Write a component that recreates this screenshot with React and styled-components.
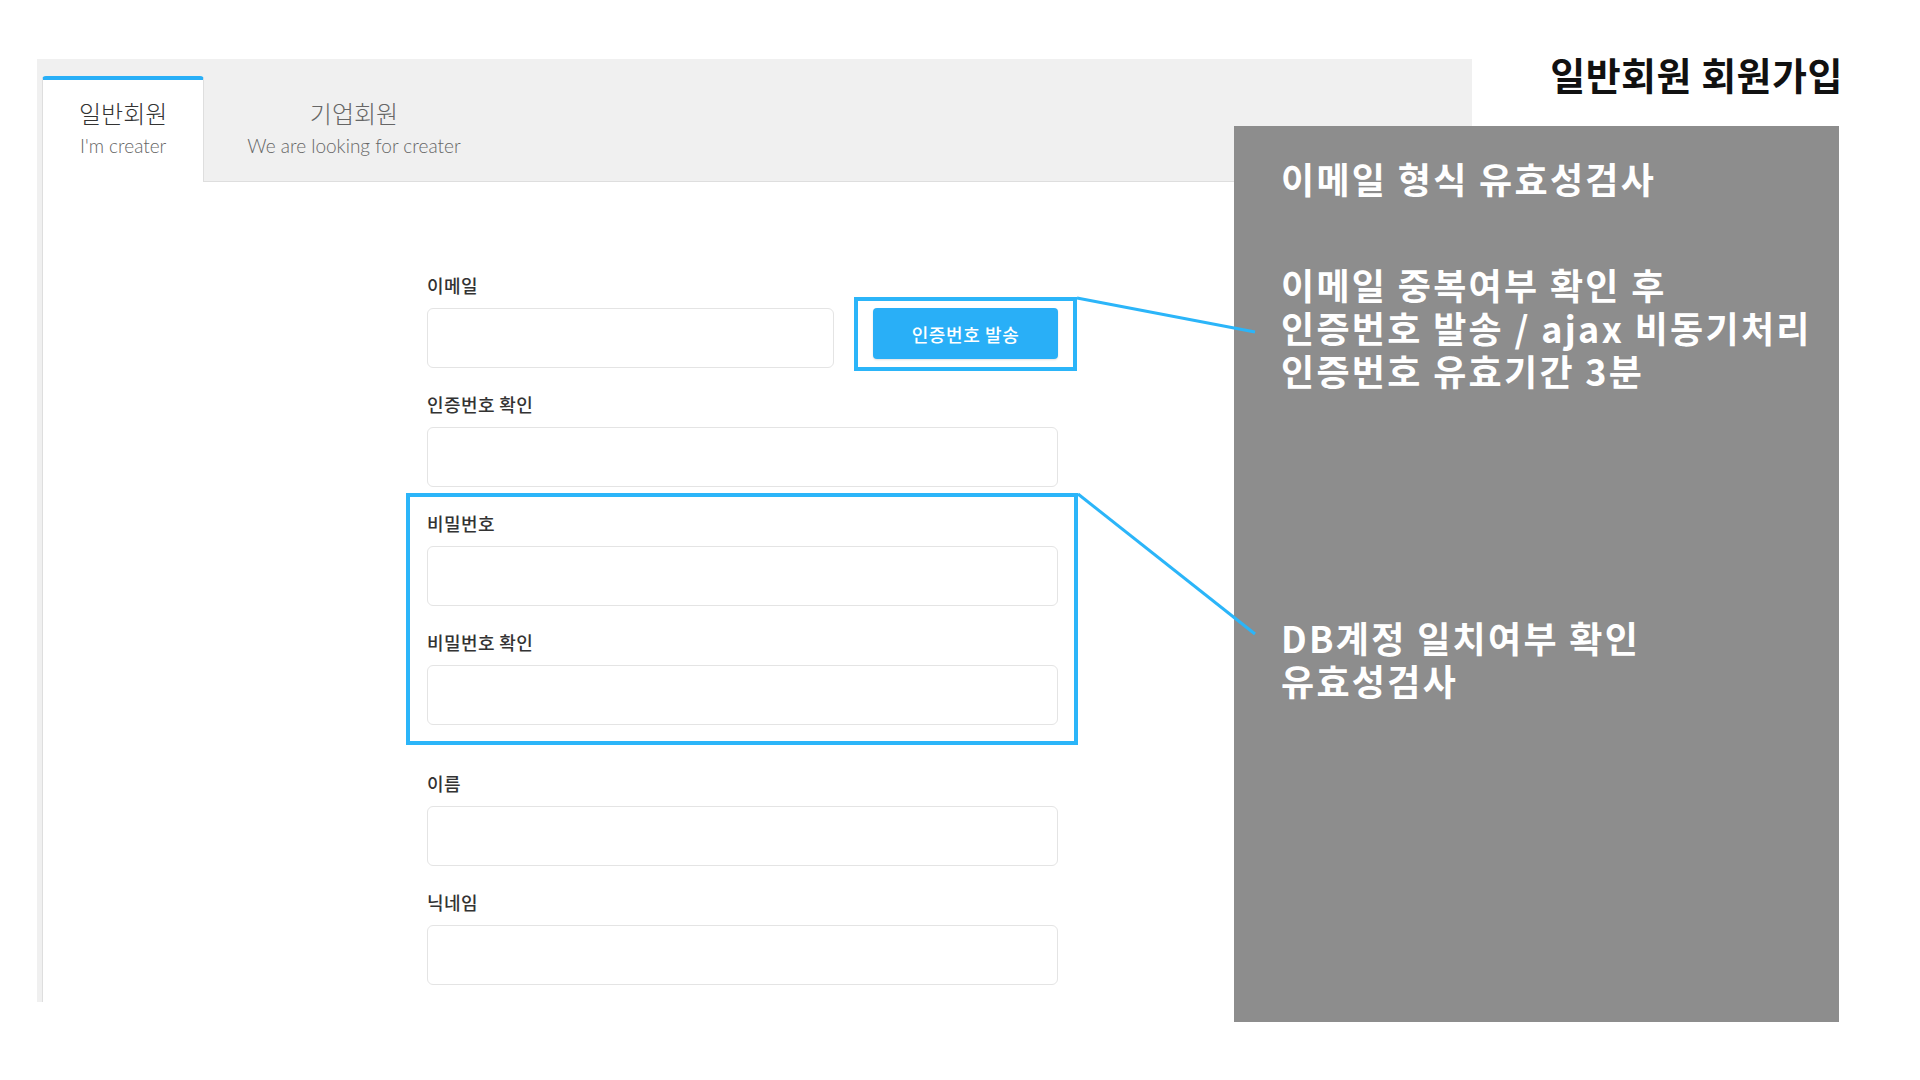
import React from 'react'
import styled, { createGlobalStyle } from 'styled-components'

const GlobalStyle = createGlobalStyle`
  body {
    margin: 0;
    background: #fff;
    font-family: "Noto Sans CJK KR", "Noto Sans", sans-serif;
  }
`

const fields = [
  { label: '인증번호 확인' },
]

export default function App() {
  return (
    <>
      <GlobalStyle />
      <Stage>
        <Shot>
          <TabBar>
            <Tab $active>
              <TabTitle>일반회원</TabTitle>
              <TabSub>I'm creater</TabSub>
            </Tab>
            <Tab>
              <TabTitle>기업회원</TabTitle>
              <TabSub>We are looking for creater</TabSub>
            </Tab>
          </TabBar>
          <Content>
            <Form>
              <Field>
                <Label>이메일</Label>
                <EmailRow>
                  <Input />
                  <Flagged>
                    <SendButton type="button">인증번호 발송</SendButton>
                  </Flagged>
                </EmailRow>
              </Field>
              {fields.map((f) => (
                <Field key={f.label}>
                  <Label>{f.label}</Label>
                  <Input />
                </Field>
              ))}
              <Group>
                <Field>
                  <Label>비밀번호</Label>
                  <Input type="password" />
                </Field>
                <Field>
                  <Label>비밀번호 확인</Label>
                  <Input type="password" />
                </Field>
              </Group>
              <Field>
                <Label>이름</Label>
                <Input />
              </Field>
              <Field>
                <Label>닉네임</Label>
                <Input />
              </Field>
            </Form>
          </Content>
        </Shot>

        <NoteColumn>
          <PageTitle>일반회원 회원가입</PageTitle>
          <NoteBox>
            <NoteBlock>이메일 형식 유효성검사</NoteBlock>
            <NoteBlock $gap={63}>
              이메일 중복여부 확인 후<br />
              인증번호 발송 / ajax 비동기처리<br />
              인증번호 유효기간 3분
            </NoteBlock>
            <NoteBlock $gap={224}>
              DB계정 일치여부 확인<br />
              유효성검사
            </NoteBlock>
          </NoteBox>
        </NoteColumn>

        <Connectors viewBox="0 0 1920 1080">
          <line x1="1077" y1="298" x2="1255" y2="332" />
          <line x1="1078" y1="494" x2="1255" y2="634" />
        </Connectors>
      </Stage>
    </>
  )
}

const Stage = styled.div`
  position: relative;
  width: 1920px;
  height: 1080px;
  box-sizing: border-box;
  padding-left: 37px;
  display: grid;
  grid-template-columns: 1197px 238px 367px;
  align-items: start;
  overflow: hidden;
`

const Shot = styled.div`
  grid-column: 1 / 3;
  grid-row: 1;
  margin-top: 59px;
  height: 943px;
  background: #f0f0f0;
  padding-left: 5px;
  display: flex;
  flex-direction: column;
`

const TabBar = styled.div`
  display: flex;
  align-items: flex-end;
  height: 123px;
  box-sizing: border-box;
  border-bottom: 1px solid #dedede;
`

const Tab = styled.div`
  height: 106px;
  box-sizing: border-box;
  margin-bottom: -1px;
  padding: 17px ${(p) => (p.$active ? 36 : 42)}px 0;
  display: flex;
  flex-direction: column;
  align-items: center;
  border-top: 4px solid ${(p) => (p.$active ? '#29aff7' : 'transparent')};
  border-left: 1px solid ${(p) => (p.$active ? '#dedede' : 'transparent')};
  border-right: 1px solid ${(p) => (p.$active ? '#dedede' : 'transparent')};
  border-radius: 4px 4px 0 0;
  background: ${(p) => (p.$active ? '#fff' : 'transparent')};
  color: ${(p) => (p.$active ? '#333' : '#666')};
`

const TabTitle = styled.div`
  font-size: 24px;
  font-weight: 300;
  line-height: 32px;
`

const TabSub = styled.div`
  margin-top: 4px;
  font-family: Lato, "Open Sans", sans-serif;
  font-size: 19px;
  font-weight: 300;
  line-height: 26px;
  color: #666;
`

const Content = styled.div`
  flex: 1;
  background: #fff;
  border-left: 1px solid #dedede;
  padding: 91px 0 0 384px;
`

const Form = styled.div`
  width: 631px;
  display: flex;
  flex-direction: column;
  gap: 24px;
`

const Field = styled.div`
  display: flex;
  flex-direction: column;
`

const Label = styled.label`
  font-size: 18px;
  font-weight: 500;
  letter-spacing: 0.4px;
  line-height: 24px;
  color: #333;
  margin-bottom: 11px;
`

const Input = styled.input`
  height: 60px;
  box-sizing: border-box;
  border: 1px solid #e4e4e4;
  border-radius: 6px;
  background: #fff;
  outline: none;
  padding: 0 16px;
  font-size: 16px;
`

const EmailRow = styled.div`
  display: flex;
  align-items: flex-start;
  gap: 39px;

  ${Input} {
    flex: 0 0 407px;
  }
`

const Flagged = styled.div`
  position: relative;
  display: flex;

  &::after {
    content: '';
    position: absolute;
    inset: -11px -19px -12px -19px;
    border: 4px solid #2bb5f9;
    pointer-events: none;
  }
`

const SendButton = styled.button`
  width: 185px;
  height: 51px;
  border: none;
  border-radius: 4px;
  background: #29aff7;
  box-shadow: 0 1px 2px rgba(0, 0, 0, 0.12);
  color: #fff;
  font-family: "Noto Sans CJK KR", sans-serif;
  font-size: 18px;
  font-weight: 500;
  letter-spacing: 0.6px;
`

const Group = styled.div`
  position: relative;
  display: flex;
  flex-direction: column;
  gap: 24px;
  margin-bottom: 22px;

  &::after {
    content: '';
    position: absolute;
    inset: -18px -20px -20px -21px;
    border: 4px solid #2bb5f9;
    pointer-events: none;
  }
`

const NoteColumn = styled.div`
  grid-column: 2 / 4;
  grid-row: 1;
  z-index: 1;
  padding-top: 51px;
  display: flex;
  flex-direction: column;
`

const PageTitle = styled.h1`
  margin: 0 -4px 0 0;
  text-align: right;
  font-size: 38px;
  font-weight: 700;
  letter-spacing: 0.5px;
  line-height: 46px;
  color: #111;
`

const NoteBox = styled.div`
  margin-top: 29px;
  height: 896px;
  box-sizing: border-box;
  background: #8d8d8d;
  padding: 31px 0 0 47px;
  color: #fff;
`

const NoteBlock = styled.p`
  margin: ${(p) => p.$gap || 0}px 0 0;
  font-size: 36px;
  font-weight: 700;
  letter-spacing: 2.3px;
  line-height: 43px;
  white-space: nowrap;
`

const Connectors = styled.svg`
  position: absolute;
  top: 0;
  left: 0;
  width: 1920px;
  height: 1080px;
  z-index: 2;
  pointer-events: none;

  line {
    stroke: #2bb5f9;
    stroke-width: 3;
  }
`
